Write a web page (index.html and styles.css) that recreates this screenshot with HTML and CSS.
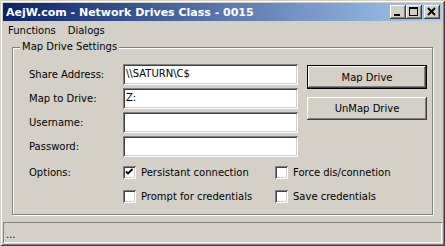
FILE: index.html
```html
<!DOCTYPE html>
<html>
<head>
<meta charset="utf-8">
<link rel="stylesheet" href="styles.css">
</head>
<body>
<div class="window">
  <div class="titlebar">
    <span class="title">AejW.com - Network Drives Class - 0015</span>
    <div class="tb-buttons">
      <span class="tb-btn"><svg width="16" height="14" viewBox="0 0 16 14"><rect x="4" y="9" width="6" height="2" fill="#000"/></svg></span>
      <span class="tb-btn"><svg width="16" height="14" viewBox="0 0 16 14"><rect x="3.5" y="2.5" width="8" height="8" fill="none" stroke="#000"/><rect x="3" y="2" width="9" height="2" fill="#000"/></svg></span>
      <span class="tb-btn close"><svg width="16" height="14" viewBox="0 0 16 14"><path d="M4 3 L11 10 M11 3 L4 10" stroke="#000" stroke-width="1.8"/></svg></span>
    </div>
  </div>
  <div class="menubar">
    <span class="menu-item">Functions</span>
    <span class="menu-item">Dialogs</span>
  </div>
  <div class="client">
    <div class="group">
      <span class="legend">Map Drive Settings</span>
      <div class="form">
        <div class="fields">
          <div class="row"><span class="label">Share Address:</span><span class="input">\\SATURN\C$</span></div>
          <div class="row"><span class="label">Map to Drive:</span><span class="input">Z:</span></div>
          <div class="row"><span class="label">Username:</span><span class="input"></span></div>
          <div class="row"><span class="label">Password:</span><span class="input"></span></div>
        </div>
        <div class="buttons">
          <span class="btn default"><span class="btn-in">Map Drive</span></span>
          <span class="btn"><span class="btn-in">UnMap Drive</span></span>
        </div>
      </div>
      <div class="options">
        <span class="label">Options:</span>
        <div class="checks">
          <span class="check"><span class="box"><svg width="9" height="9" viewBox="0 0 9 9"><path d="M1 3.5 L3 5.5 L7.5 1" fill="none" stroke="#000" stroke-width="1.9"/></svg></span>Persistant connection</span>
          <span class="check"><span class="box"></span>Force dis/connetion</span>
          <span class="check"><span class="box"></span>Prompt for credentials</span>
          <span class="check"><span class="box"></span>Save credentials</span>
        </div>
      </div>
    </div>
  </div>
  <div class="statusbar">...</div>
</div>
</body>
</html>
```

FILE: styles.css
```css
html, body {
  margin: 0;
  padding: 0;
  background: #d4d0c8;
}
.window {
  width: 445px;
  height: 246px;
  box-sizing: border-box;
  padding: 3px;
  background: #d4d0c8;
  font-family: "DejaVu Sans", sans-serif;
  font-size: 10px;
  color: #000;
  display: flex;
  flex-direction: column;
  box-shadow: inset 1px 1px 0 #d4d0c8, inset -1px -1px 0 #404040, inset 2px 2px 0 #fff, inset -2px -2px 0 #808080;
}
.titlebar {
  height: 18px;
  background: linear-gradient(to right, #0a246a, #a6caf0);
  display: flex;
  align-items: center;
  justify-content: space-between;
  padding: 0 2px 0 3px;
}
.title {
  color: #fff;
  font-weight: bold;
  font-size: 11px;
  white-space: nowrap;
}
.tb-buttons {
  display: flex;
  gap: 0;
}
.tb-btn {
  width: 16px;
  height: 14px;
  background: #d4d0c8;
  box-shadow: inset -1px -1px 0 #404040, inset 1px 1px 0 #fff, inset -2px -2px 0 #808080;
  display: block;
}
.tb-btn svg { display: block; }
.tb-btn.close { margin-left: 2px; }
.menubar {
  height: 19px;
  display: flex;
  align-items: center;
  padding-left: 5px;
  gap: 0;
}
.menu-item {
  margin-right: 12px;
}
.client {
  flex: 1;
  padding: 7px 9px 6px 9px;
  display: flex;
}
.group {
  flex: 1;
  position: relative;
  border: 1px solid #808080;
  box-shadow: inset 1px 1px 0 #fff, 1px 1px 0 #fff;
  padding: 16px 5px 0 16px;
  margin-right: 1px;
  margin-bottom: 1px;
}
.legend {
  position: absolute;
  top: -7px;
  left: 7px;
  padding: 0 2px;
  background: #d4d0c8;
}
.form {
  display: flex;
  gap: 9px;
}
.fields {
  display: flex;
  flex-direction: column;
  gap: 3px;
}
.row {
  display: flex;
  align-items: center;
  height: 21px;
}
.label {
  width: 94px;
  flex: none;
}
.input {
  width: 175px;
  height: 21px;
  box-sizing: border-box;
  background: #fff;
  box-shadow: inset 1px 1px 0 #808080, inset -1px -1px 0 #fff, inset 2px 2px 0 #404040, inset -2px -2px 0 #d4d0c8;
  padding: 4px 3px 0 3px;
  white-space: nowrap;
}
.buttons {
  display: flex;
  flex-direction: column;
  gap: 8px;
  padding-top: 1px;
}
.btn {
  width: 120px;
  height: 23px;
  box-sizing: border-box;
  display: block;
  box-shadow: inset -1px -1px 0 #404040, inset 1px 1px 0 #fff, inset -2px -2px 0 #808080;
}
.btn-in {
  display: flex;
  height: 100%;
  align-items: center;
  justify-content: center;
}
.btn.default {
  height: 24px;
  border: 1px solid #000;
}
.options {
  display: flex;
  padding-top: 3px;
}
.options .label {
  height: 24px;
  display: flex;
  align-items: center;
}
.checks {
  display: grid;
  grid-template-columns: 152px auto;
}
.check {
  height: 24px;
  display: flex;
  align-items: center;
  gap: 5px;
  white-space: nowrap;
}
.box {
  width: 13px;
  height: 13px;
  box-sizing: border-box;
  background: #fff;
  box-shadow: inset 1px 1px 0 #808080, inset -1px -1px 0 #fff, inset 2px 2px 0 #404040, inset -2px -2px 0 #d4d0c8;
  display: flex;
  align-items: center;
  justify-content: center;
  flex: none;
}
.box svg { display: block; }
.statusbar {
  height: 21px;
  box-sizing: border-box;
  box-shadow: inset 1px 1px 0 #808080, inset -1px -1px 0 #fff;
  padding: 7px 0 0 3px;
}
```
